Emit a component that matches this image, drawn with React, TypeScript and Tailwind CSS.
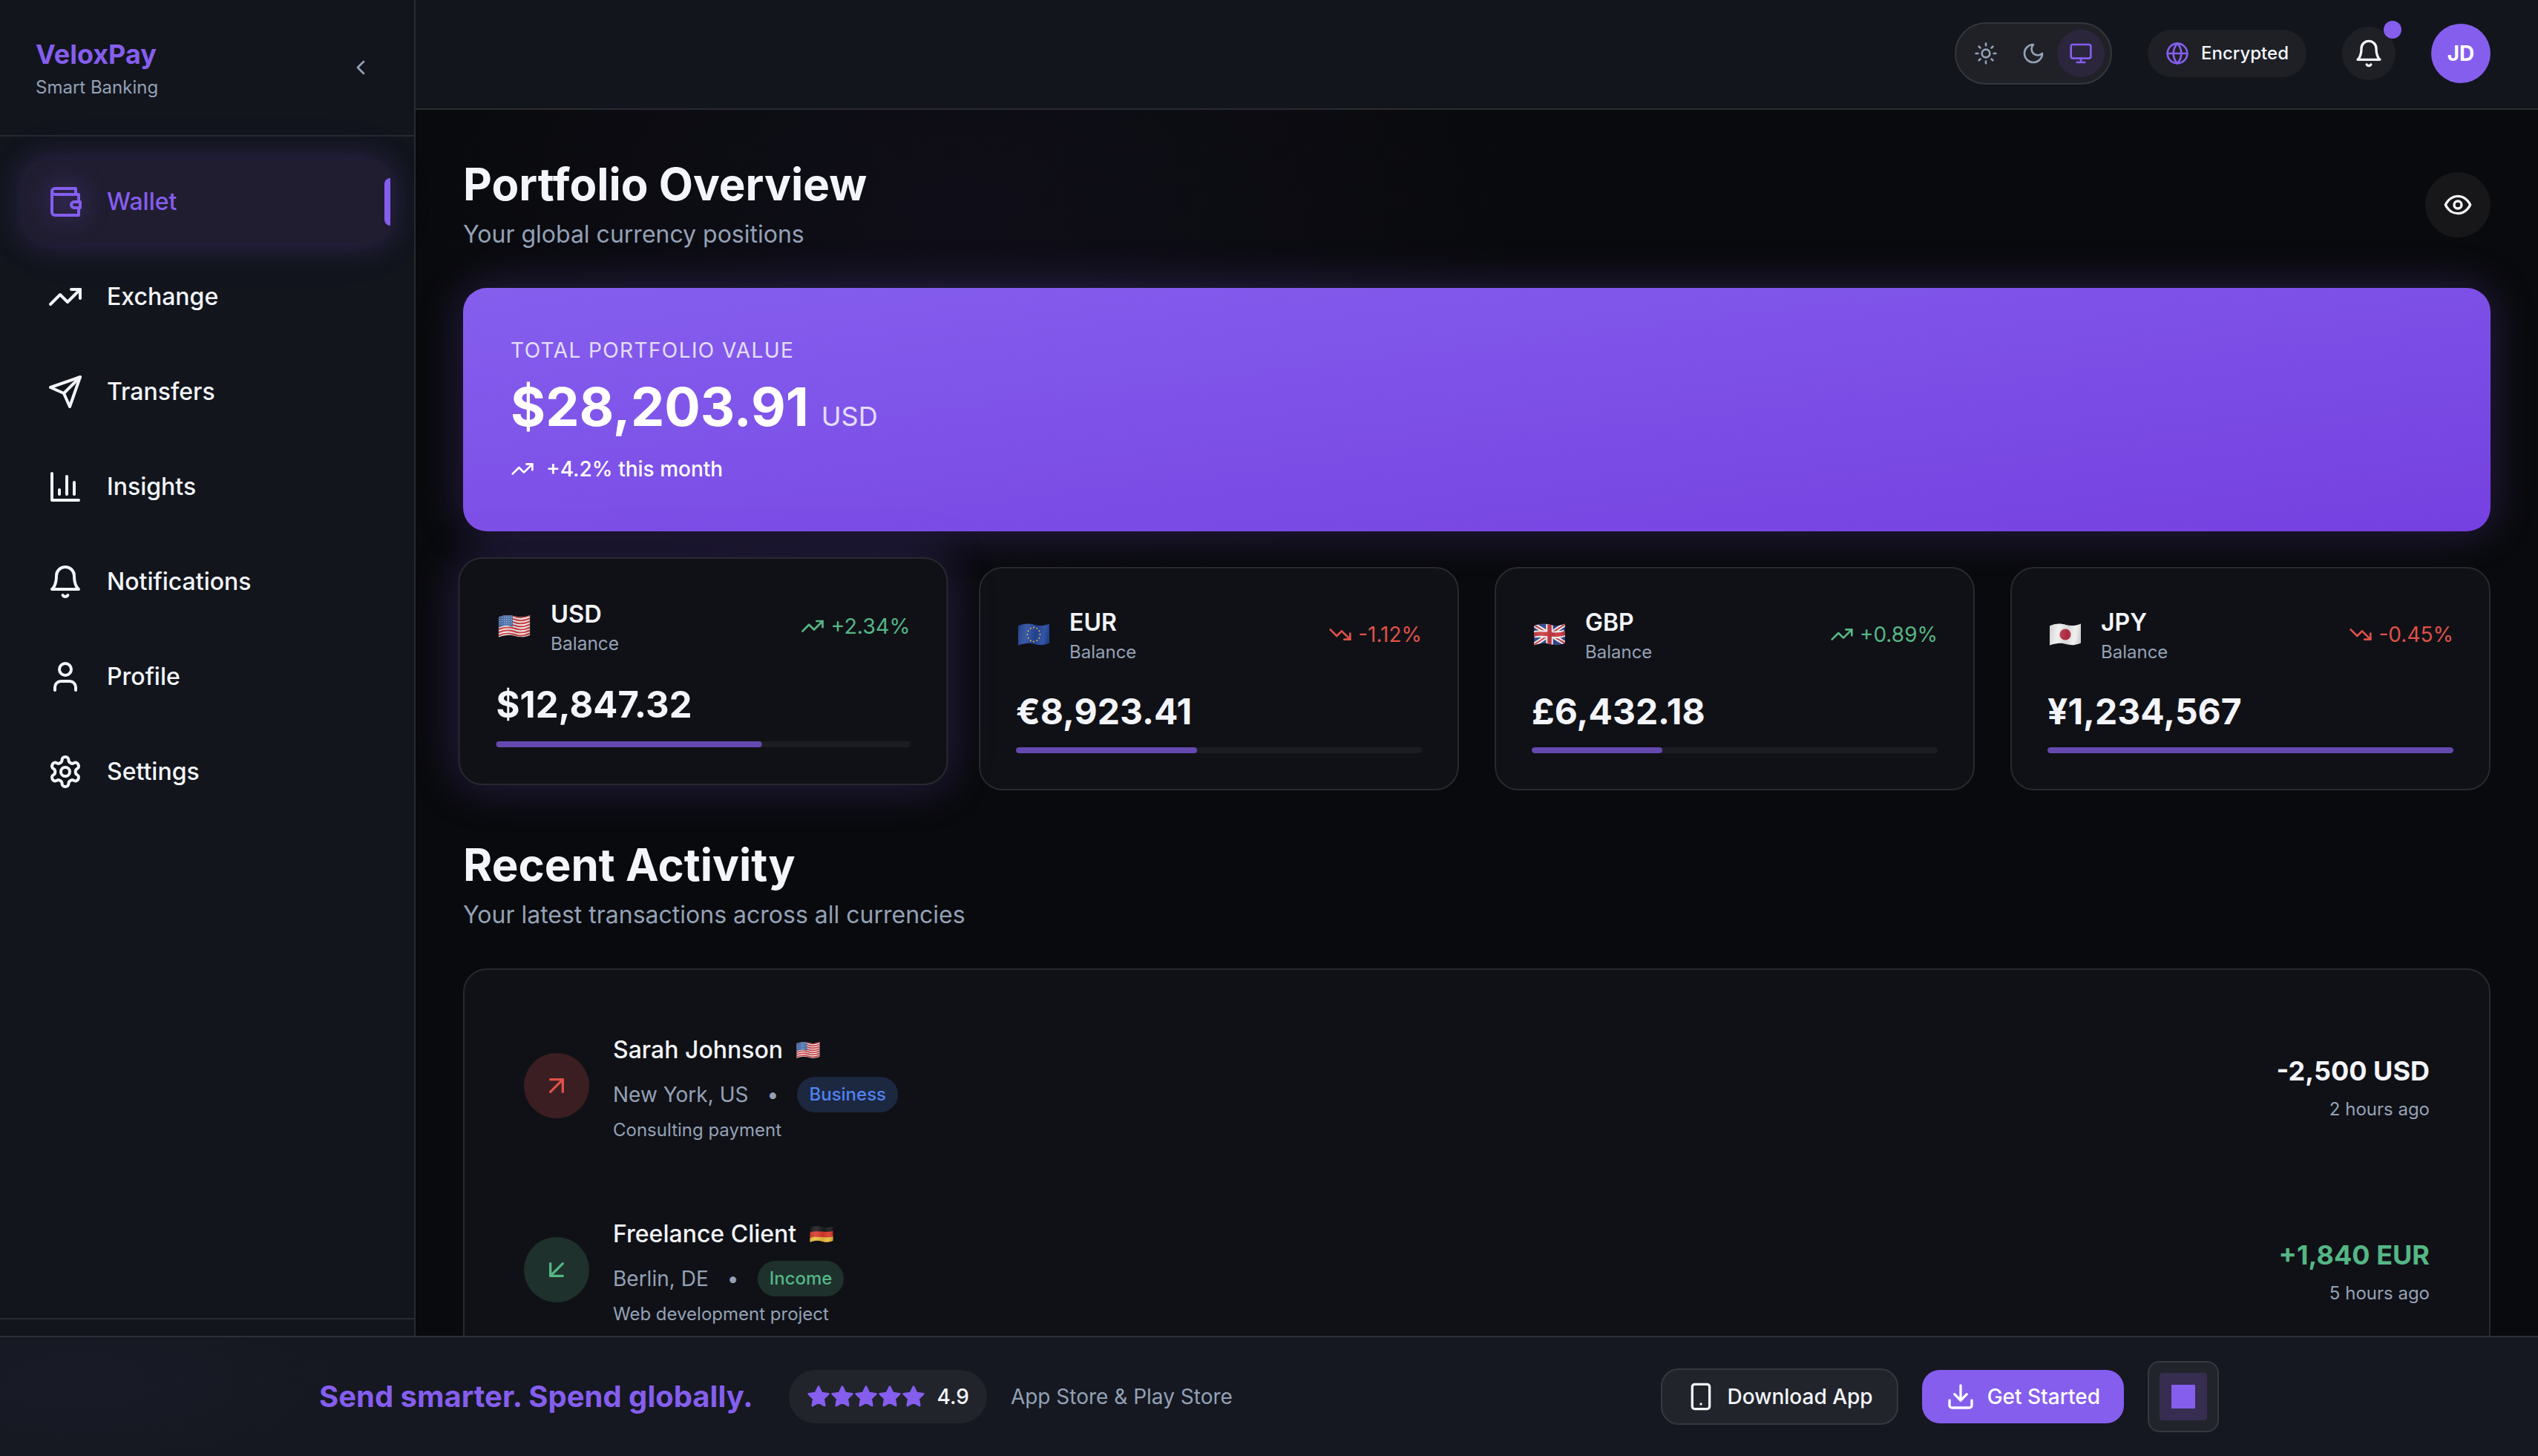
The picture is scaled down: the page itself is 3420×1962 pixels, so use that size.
import type { ReactNode } from "react";

type IconProps = { className?: string; children: ReactNode; filled?: boolean };

function Icon({ className, children, filled }: IconProps) {
  return (
    <svg
      viewBox="0 0 24 24"
      fill={filled ? "currentColor" : "none"}
      stroke="currentColor"
      strokeWidth="2"
      strokeLinecap="round"
      strokeLinejoin="round"
      aria-hidden="true"
      className={className}
    >
      {children}
    </svg>
  );
}

const bell = (
  <>
    <path d="M6 8a6 6 0 0 1 12 0c0 7 3 9 3 9H3s3-2 3-9" />
    <path d="M10.3 21a1.94 1.94 0 0 0 3.4 0" />
  </>
);
const trendUp = (
  <>
    <path d="m22 7-8.5 8.5-5-5L2 17" />
    <path d="M16 7h6v6" />
  </>
);
const trendDown = (
  <>
    <path d="m22 17-8.5-8.5-5 5L2 7" />
    <path d="M16 17h6v-6" />
  </>
);

const navItems = [
  {
    label: "Wallet",
    active: true,
    icon: (
      <>
        <path d="M21 12V7H5a2 2 0 0 1 0-4h14v4" />
        <path d="M3 5v14a2 2 0 0 0 2 2h16v-5" />
        <path d="M18 12a2 2 0 0 0 0 4h4v-4Z" />
      </>
    ),
  },
  { label: "Exchange", icon: trendUp },
  {
    label: "Transfers",
    icon: (
      <>
        <path d="m22 2-7 20-4-9-9-4Z" />
        <path d="M22 2 11 13" />
      </>
    ),
  },
  {
    label: "Insights",
    icon: (
      <>
        <path d="M3 3v18h18" />
        <path d="M18 17V9" />
        <path d="M13 17V5" />
        <path d="M8 17v-3" />
      </>
    ),
  },
  { label: "Notifications", icon: bell },
  {
    label: "Profile",
    icon: (
      <>
        <path d="M19 21v-2a4 4 0 0 0-4-4H9a4 4 0 0 0-4 4v2" />
        <circle cx="12" cy="7" r="4" />
      </>
    ),
  },
  {
    label: "Settings",
    icon: (
      <>
        <path d="M12.22 2h-.44a2 2 0 0 0-2 2v.18a2 2 0 0 1-1 1.73l-.43.25a2 2 0 0 1-2 0l-.15-.08a2 2 0 0 0-2.73.73l-.22.38a2 2 0 0 0 .73 2.73l.15.1a2 2 0 0 1 1 1.72v.51a2 2 0 0 1-1 1.74l-.15.09a2 2 0 0 0-.73 2.73l.22.38a2 2 0 0 0 2.73.73l.15-.08a2 2 0 0 1 2 0l.43.25a2 2 0 0 1 1 1.73V20a2 2 0 0 0 2 2h.44a2 2 0 0 0 2-2v-.18a2 2 0 0 1 1-1.73l.43-.25a2 2 0 0 1 2 0l.15.08a2 2 0 0 0 2.73-.73l.22-.39a2 2 0 0 0-.73-2.73l-.15-.08a2 2 0 0 1-1-1.74v-.5a2 2 0 0 1 1-1.74l.15-.09a2 2 0 0 0 .73-2.73l-.22-.38a2 2 0 0 0-2.73-.73l-.15.08a2 2 0 0 1-2 0l-.43-.25a2 2 0 0 1-1-1.73V4a2 2 0 0 0-2-2z" />
        <circle cx="12" cy="12" r="3" />
      </>
    ),
  },
];

type Country = "us" | "eu" | "gb" | "jp" | "de";

const flagNames: Record<Country, string> = {
  us: "United States",
  eu: "European Union",
  gb: "United Kingdom",
  jp: "Japan",
  de: "Germany",
};

const flagArt: Record<Country, ReactNode> = {
  us: (
    <>
      <rect width="42" height="40" fill="#f2f0f0" />
      {[0, 1, 2, 3, 4, 5, 6].map((n) => (
        <path
          key={n}
          d={`M0 ${3.2 + n * 4} C10 ${-0.8 + n * 4} 16 ${-0.2 + n * 4} 22 ${2.2 + n * 4} S34 ${4 + n * 4} 42 ${0.6 + n * 4}`}
          fill="none"
          stroke="#cf3c42"
          strokeWidth="2.1"
        />
      ))}
      <path d="M0 0 H19 V16 C12 13 6 14 0 17Z" fill="#3f68a8" />
      {[3, 6, 9, 12].map((y) =>
        [2, 5, 8, 11, 14, 17].map((x) => <circle key={`${x}-${y}`} cx={x} cy={y} r="0.6" fill="#dbe4f2" />),
      )}
    </>
  ),
  eu: (
    <>
      <rect width="42" height="40" fill="#26489c" />
      {Array.from({ length: 12 }, (_, n) => (
        <circle
          key={n}
          cx={21 + 8.5 * Math.sin((n * Math.PI) / 6)}
          cy={15 + 9.5 * Math.cos((n * Math.PI) / 6)}
          r="1"
          fill="#e3c94b"
        />
      ))}
    </>
  ),
  gb: (
    <>
      <rect width="42" height="40" fill="#2b3f86" />
      <path d="M0 2 42 27M0 29 42 1" stroke="#f3f3f5" strokeWidth="6" />
      <path d="M0 2 42 27M0 29 42 1" stroke="#c9373f" strokeWidth="2" />
      <path d="M21 0V34M0 15C14 11 28 19 42 13" fill="none" stroke="#f3f3f5" strokeWidth="9.5" />
      <path d="M21 0V34M0 15C14 11 28 19 42 13" fill="none" stroke="#cb3840" strokeWidth="5.5" />
    </>
  ),
  jp: (
    <>
      <rect width="42" height="40" fill="#eeeeee" />
      <circle cx="21" cy="15" r="7.6" fill="#bb3049" />
    </>
  ),
  de: (
    <>
      <rect width="42" height="40" fill="#1d1d1f" />
      <path d="M0 12C14 7 28 14 42 9V40H0Z" fill="#d93a2b" />
      <path d="M0 22C14 17 28 24 42 19V40H0Z" fill="#e9bf3e" />
    </>
  ),
};

function Flag({ country, id, className }: { country: Country; id: string; className: string }) {
  return (
    <svg viewBox="-3 -9 48 48" role="img" aria-label={flagNames[country]} className={className}>
      <defs>
        <clipPath id={`wave-${id}`}>
          <path d="M0 3.2C10 -0.6 16 0.4 22 2S34 3.6 42 0.4V26.6C34 30 28 29.6 22 28S10 26 0 29.6Z" />
        </clipPath>
        <linearGradient id={`shade-${id}`} x1="0" x2="1" y1="0" y2="0.15">
          <stop offset="0" stopColor="#000" stopOpacity="0.14" />
          <stop offset="0.3" stopColor="#fff" stopOpacity="0.1" />
          <stop offset="0.62" stopColor="#000" stopOpacity="0.1" />
          <stop offset="0.85" stopColor="#fff" stopOpacity="0.06" />
          <stop offset="1" stopColor="#000" stopOpacity="0.12" />
        </linearGradient>
      </defs>
      <g clipPath={`url(#wave-${id})`}>
        {flagArt[country]}
        <rect width="42" height="40" fill={`url(#shade-${id})`} />
      </g>
    </svg>
  );
}

type Balance = {
  code: string;
  country: Country;
  amount: string;
  change: string;
  up: boolean;
  share: number;
  raised?: boolean;
};

const balances: Balance[] = [
  { code: "USD", country: "us", amount: "$12,847.32", change: "+2.34%", up: true, share: 64.2, raised: true },
  { code: "EUR", country: "eu", amount: "€8,923.41", change: "-1.12%", up: false, share: 44.6 },
  { code: "GBP", country: "gb", amount: "£6,432.18", change: "+0.89%", up: true, share: 32.2 },
  { code: "JPY", country: "jp", amount: "¥1,234,567", change: "-0.45%", up: false, share: 100 },
];

const activity = [
  {
    name: "Sarah Johnson",
    country: "us" as Country,
    place: "New York, US",
    tag: "Business",
    tagStyle: "bg-[#1c2740] text-[#4f82ee]",
    note: "Consulting payment",
    amount: "-2,500 USD",
    amountStyle: "text-[#f3f5fa]",
    time: "2 hours ago",
    circle: "bg-[#3a1e22] text-[#df5149]",
    arrow: (
      <>
        <path d="M7 7h10v10" />
        <path d="M7 17 17 7" />
      </>
    ),
  },
  {
    name: "Freelance Client",
    country: "de" as Country,
    place: "Berlin, DE",
    tag: "Income",
    tagStyle: "bg-[#1e312c] text-[#55b685]",
    note: "Web development project",
    amount: "+1,840 EUR",
    amountStyle: "text-[#55b685]",
    time: "5 hours ago",
    circle: "bg-[#1e312c] text-[#55b685]",
    arrow: (
      <>
        <path d="M17 7 7 17" />
        <path d="M17 17H7V7" />
      </>
    ),
  },
];

function Sidebar() {
  return (
    <aside className="flex w-[560px] shrink-0 flex-col border-r-2 border-[#292b31] bg-[#12151c]">
      <div className="flex items-center justify-between border-b-2 border-[#292b31] p-12">
        <div>
          <div className="text-[36px] leading-[50px] font-bold text-[#855eee]">VeloxPay</div>
          <div className="mt-1 text-[24px] leading-8 text-[#94a1b6]">Smart Banking</div>
        </div>
        <button type="button" aria-label="Collapse sidebar" className="p-2 text-[#94a1b6]">
          <Icon className="size-8">
            <path d="m15 18-6-6 6-6" />
          </Icon>
        </button>
      </div>
      <nav className="flex flex-1 flex-col gap-4 p-8">
        {navItems.map((item) => (
          <a
            key={item.label}
            href="#"
            aria-current={item.active ? "page" : undefined}
            className={
              item.active
                ? "relative flex h-28 items-center gap-8 rounded-3xl bg-[#201d31] px-8 text-[#855eee] shadow-[0_0_40px_rgba(133,94,238,0.24),0_0_80px_rgba(133,94,238,0.06)]"
                : "flex h-28 items-center gap-8 rounded-3xl px-8 text-[#f3f5fa]"
            }
          >
            <Icon className={item.active ? "size-12 drop-shadow-[0_0_16px_rgba(133,94,238,0.5)]" : "size-12"}>
              {item.icon}
            </Icon>
            <span className="text-[32px] leading-[48px] font-medium">{item.label}</span>
            {item.active && <span className="absolute top-6 right-0 h-16 w-2 rounded-l-full bg-[#855eee]" />}
          </a>
        ))}
      </nav>
      <div className="h-[186px] border-t-2 border-[#292b31]" />
    </aside>
  );
}

function Header() {
  return (
    <header className="flex items-center justify-end gap-12 border-b-2 border-[#292b31] bg-[#12151c] px-16 pt-[30px] pb-8">
      <div className="flex rounded-full border-2 border-[#34363c] bg-[#1f2127] p-2 text-[#94a1b6]">
        <button type="button" aria-label="Light theme" className="rounded-full p-4">
          <Icon className="size-8">
            <circle cx="12" cy="12" r="4" />
            <path d="M12 2v2M12 20v2M4.93 4.93l1.41 1.41M17.66 17.66l1.41 1.41M2 12h2M20 12h2M6.34 17.66l-1.41 1.41M19.07 4.93l-1.41 1.41" />
          </Icon>
        </button>
        <button type="button" aria-label="Dark theme" className="rounded-full p-4">
          <Icon className="size-8">
            <path d="M12 3a6 6 0 0 0 9 9 9 9 0 1 1-9-9Z" />
          </Icon>
        </button>
        <button
          type="button"
          aria-label="System theme"
          aria-pressed="true"
          className="rounded-full bg-[#2b263b] p-4 text-[#855eee]"
        >
          <Icon className="size-8">
            <rect width="20" height="14" x="2" y="3" rx="2" />
            <path d="M8 21h8M12 17v4" />
          </Icon>
        </button>
      </div>
      <div className="flex h-16 items-center gap-4 rounded-full bg-[#1e2026] px-6">
        <Icon className="size-8 text-[#855eee]">
          <circle cx="12" cy="12" r="10" />
          <path d="M12 2a14.5 14.5 0 0 0 0 20 14.5 14.5 0 0 0 0-20" />
          <path d="M2 12h20" />
        </Icon>
        <span className="text-[24px] leading-8 font-medium text-[#f3f5fa]">Encrypted</span>
      </div>
      <button
        type="button"
        aria-label="Notifications"
        className="relative rounded-full bg-[#1e2026] p-4 text-[#f3f5fa]"
      >
        <Icon className="size-10">{bell}</Icon>
        <span className="absolute -top-2 -right-2 size-6 rounded-full bg-[#855eee]" />
      </button>
      <button
        type="button"
        aria-label="Account of JD"
        className="size-20 rounded-full bg-[#855eee] text-[28px] leading-10 font-bold text-white"
      >
        JD
      </button>
    </header>
  );
}

function BalanceCard({ item }: { item: Balance }) {
  return (
    <article
      className={
        item.raised
          ? "-translate-y-2.5 scale-[1.02] rounded-[32px] border-2 border-[#28292e] bg-[#101116] p-12 shadow-[0_0_60px_rgba(133,94,238,0.26)]"
          : "rounded-[32px] border-2 border-[#28292e] bg-[#101116] p-12"
      }
    >
      <div className="flex items-center justify-between">
        <div className="flex items-center gap-6">
          <Flag country={item.country} id={item.code} className="size-12" />
          <div>
            <h3 className="text-[32px] leading-[49px] font-semibold text-[#f3f5fa]">{item.code}</h3>
            <p className="text-[24px] leading-8 text-[#94a1b6]">Balance</p>
          </div>
        </div>
        <div className={item.up ? "flex items-center gap-2 text-[#55b685]" : "flex items-center gap-2 text-[#df5149]"}>
          <Icon className="size-8">{item.up ? trendUp : trendDown}</Icon>
          <span className="text-[28px] leading-10">{item.change}</span>
        </div>
      </div>
      <p className="mt-8 text-[48px] leading-[64px] font-bold text-[#f3f5fa]">{item.amount}</p>
      <div className="mt-4 h-2 overflow-hidden rounded-full bg-[#1c1d22]">
        <div className="h-full rounded-full bg-[#6549b0]" style={{ width: `${item.share}%` }} />
      </div>
    </article>
  );
}

function Activity() {
  return (
    <ul className="mt-12 flex flex-col gap-8 rounded-[32px] border-2 border-[#28292e] bg-[#101116] p-12">
      {activity.map((row) => (
        <li key={row.name} className="flex items-center justify-between p-8">
          <div className="flex items-center gap-8">
            <div className={`rounded-full p-6 ${row.circle}`}>
              <Icon className="size-10">{row.arrow}</Icon>
            </div>
            <div>
              <div className="flex h-14 items-center gap-4">
                <h3 className="text-[32px] leading-[48px] font-medium text-[#f3f5fa]">{row.name}</h3>
                <Flag country={row.country} id={row.tag} className="size-9" />
              </div>
              <div className="mt-2 flex items-center gap-6 text-[28px] leading-10 text-[#94a1b6]">
                <span>{row.place}</span>
                <span className="w-[18px] text-center">•</span>
                <span className={`rounded-full px-4 py-2 text-[24px] leading-8 font-medium ${row.tagStyle}`}>
                  {row.tag}
                </span>
              </div>
              <p className="mt-2 text-[24px] leading-8 text-[#94a1b6]">{row.note}</p>
            </div>
          </div>
          <div className="text-right">
            <p className={`text-[36px] leading-[56px] font-bold ${row.amountStyle}`}>{row.amount}</p>
            <p className="mt-2 text-[24px] leading-8 text-[#94a1b6]">{row.time}</p>
          </div>
        </li>
      ))}
    </ul>
  );
}

function PromoBar() {
  return (
    <footer className="fixed inset-x-0 bottom-0 border-t-2 border-[#2c2f36] bg-[#151820] bg-[radial-gradient(ellipse_400px_130px_at_100px_60px,rgba(133,94,238,0.03),transparent)] py-8">
      <div className="mx-auto flex max-w-[2560px] items-center justify-between">
        <div className="flex items-center gap-8">
          <p className="mr-4 text-[40px] leading-[56px] font-bold text-[#855eee]">Send smarter. Spend globally.</p>
          <div className="flex h-[72px] items-center gap-4 rounded-full bg-[#21242b] px-6">
            <div className="flex text-[#855eee]" role="img" aria-label="Five stars">
              {[1, 2, 3, 4, 5].map((n) => (
                <Icon key={n} filled className="size-8">
                  <path d="m12 2 3.09 6.26L22 9.27l-5 4.87 1.18 6.88L12 17.77l-6.18 3.25L7 14.14 2 9.27l6.91-1.01L12 2z" />
                </Icon>
              ))}
            </div>
            <span className="text-[28px] leading-10 font-medium text-[#f3f5fa]">4.9</span>
          </div>
          <span className="text-[28px] leading-10 text-[#94a1b6]">App Store &amp; Play Store</span>
        </div>
        <div className="flex items-center gap-8">
          <button
            type="button"
            className="flex items-center gap-4 rounded-3xl border-2 border-[#36383f] bg-[#21242b] px-8 py-4 text-[28px] leading-10 font-medium text-[#f3f5fa]"
          >
            <Icon className="size-10">
              <rect width="14" height="20" x="5" y="2" rx="2" />
              <path d="M12 18h.01" />
            </Icon>
            Download App
          </button>
          <button
            type="button"
            className="flex items-center gap-4 rounded-3xl bg-[#855eee] px-8 py-4 text-[28px] leading-10 font-medium text-white"
          >
            <Icon className="size-10">
              <path d="M21 15v4a2 2 0 0 1-2 2H5a2 2 0 0 1-2-2v-4" />
              <path d="m7 10 5 5 5-5" />
              <path d="M12 15V3" />
            </Icon>
            Get Started
          </button>
          <button
            type="button"
            aria-label="Show QR code"
            className="flex size-24 items-center justify-center rounded-2xl border-2 border-[#36383f] bg-[#21242b]"
          >
            <span className="flex size-16 items-center justify-center rounded-[4px] bg-[#362d50]">
              <span className="size-8 bg-[#855eee]" />
            </span>
          </button>
        </div>
      </div>
    </footer>
  );
}

export default function App() {
  return (
    <div className="flex h-screen overflow-hidden bg-[#090a0d] font-[Inter,sans-serif] antialiased">
      <Sidebar />
      <div className="flex min-w-0 flex-1 flex-col">
        <Header />
        <main className="min-h-0 flex-1 overflow-hidden bg-[radial-gradient(ellipse_760px_560px_at_740px_140px,rgba(133,94,238,0.05),transparent)] p-16">
          <section>
            <div className="flex items-center justify-between">
              <div>
                <h1 className="text-[60px] leading-[72px] font-bold text-[#f3f5fa]">Portfolio Overview</h1>
                <p className="mt-2 text-[32px] leading-[48px] text-[#94a1b6]">Your global currency positions</p>
              </div>
              <button type="button" aria-label="Hide balances" className="rounded-full bg-[#171719] p-6 text-[#f3f5fa]">
                <Icon className="size-10">
                  <path d="M2 12s3-7 10-7 10 7 10 7-3 7-10 7-10-7-10-7Z" />
                  <circle cx="12" cy="12" r="3" />
                </Icon>
              </button>
            </div>
            <div className="mt-12 rounded-[32px] bg-linear-to-br from-[#855eee] to-[#7540e0] p-16 text-white shadow-[0_0_60px_rgba(133,94,238,0.26)]">
              <p className="text-[28px] leading-10 tracking-wider text-white/80 uppercase">Total Portfolio Value</p>
              <p className="mt-4 text-[72px] leading-[80px] font-bold">
                $28,203.91 <span className="text-[36px] leading-none font-normal text-white/80">USD</span>
              </p>
              <p className="mt-6 flex items-center gap-4 text-[28px] leading-10 font-medium">
                <Icon className="size-8">{trendUp}</Icon>
                +4.2% this month
              </p>
            </div>
            <div className="mt-12 grid grid-cols-4 gap-12">
              {balances.map((item) => (
                <BalanceCard key={item.code} item={item} />
              ))}
            </div>
          </section>
          <section className="mt-16">
            <h2 className="text-[60px] leading-[72px] font-bold text-[#f3f5fa]">Recent Activity</h2>
            <p className="mt-2 text-[32px] leading-[48px] text-[#94a1b6]">
              Your latest transactions across all currencies
            </p>
            <Activity />
          </section>
        </main>
      </div>
      <PromoBar />
    </div>
  );
}
